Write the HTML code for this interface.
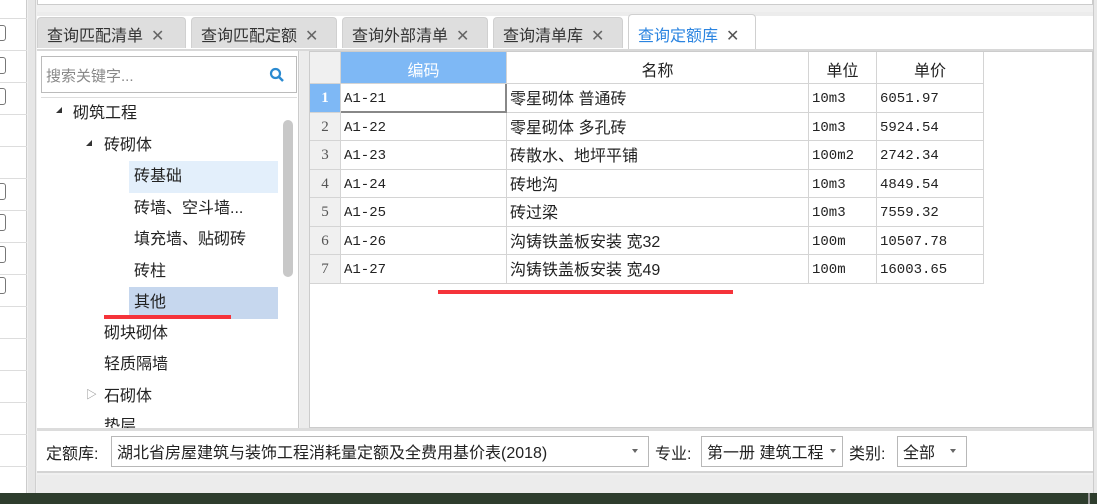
<!DOCTYPE html>
<html><head><meta charset="utf-8"><style>
*{margin:0;padding:0;box-sizing:border-box}
body{width:1097px;height:504px;overflow:hidden;background:#f0f0f0;font-family:"Liberation Sans","Noto Sans CJK SC",sans-serif;font-size:15px;color:#222;position:relative}
.a{position:absolute}
.tab{position:absolute;top:17px;height:31px;background:#dedede;border:1px solid #d0d0d0;border-bottom:none;border-radius:4px 4px 0 0;font-size:16px;color:#333;padding:4px 0 0 9px;white-space:nowrap}
.tab b{font-weight:normal;color:#666;margin-left:8px}
.tr{position:absolute;font-size:16px;color:#222;white-space:nowrap}
.cell{position:absolute;border-right:1px solid #d4d4d4;border-bottom:1px solid #d4d4d4;background:#fff;white-space:nowrap;overflow:hidden}
.mono{font-family:"Liberation Mono","Noto Sans CJK SC",monospace;font-size:14px}
.rh{position:absolute;left:310px;width:31px;background:#f0f0f0;border-right:1px solid #d4d4d4;border-bottom:1px solid #d4d4d4;text-align:center;font-family:"Liberation Serif",serif;font-size:15px;color:#555}
.sel{position:absolute;height:31px;top:436px;background:#fff;border:1px solid #b8b8b8;font-size:16px;padding:2px 0 0 5px;white-space:nowrap;overflow:hidden}
.arr{position:absolute;top:12px;width:0;height:0;border-left:3px solid transparent;border-right:3px solid transparent;border-top:4px solid #666}
.tri{position:absolute;width:0;height:0;border-left:6px solid transparent;border-bottom:6px solid #333}
</style></head><body>
<div class="a" style="left:0;top:0;width:27px;height:493px;background:#fff;border-right:1px solid #ccc"></div>
<div class="a" style="left:0;top:18px;width:27px;height:1px;background:#ddd;box-shadow:0 32px 0 #ddd,0 64px 0 #ddd,0 96px 0 #ddd,0 128px 0 #ddd,0 160px 0 #ddd,0 192px 0 #ddd,0 224px 0 #ddd,0 256px 0 #ddd,0 288px 0 #ddd,0 320px 0 #ddd,0 352px 0 #ddd,0 384px 0 #ddd,0 416px 0 #ddd,0 448px 0 #ddd"></div>
<div class="a" style="left:-6px;top:25px;width:12px;height:16px;border:1px solid #777;border-radius:3px"></div>
<div class="a" style="left:-6px;top:57px;width:12px;height:17px;border:1px solid #777;border-radius:3px"></div>
<div class="a" style="left:-6px;top:88px;width:12px;height:17px;border:1px solid #777;border-radius:3px"></div>
<div class="a" style="left:-6px;top:183px;width:12px;height:17px;border:1px solid #777;border-radius:3px"></div>
<div class="a" style="left:-6px;top:214px;width:12px;height:17px;border:1px solid #777;border-radius:3px"></div>
<div class="a" style="left:-6px;top:246px;width:12px;height:17px;border:1px solid #777;border-radius:3px"></div>
<div class="a" style="left:-6px;top:277px;width:12px;height:17px;border:1px solid #777;border-radius:3px"></div>
<div class="a" style="left:28px;top:0;width:8px;height:493px;background:#e6e6e6;border-right:1px solid #d0d0d0"></div>
<div class="a" style="left:37px;top:0;width:1056px;height:5px;background:#fff;border:1px solid #ccc;border-top:none"></div>
<div class="a" style="left:37px;top:12px;width:1056px;height:38px;background:#fff"></div>
<div class="a" style="left:37px;top:12px;width:1056px;height:4px;background:#ececec"></div>
<div class="tab" style="left:37px;width:149px">查询匹配清单<b>✕</b></div>
<div class="tab" style="left:191px;width:146px">查询匹配定额<b>✕</b></div>
<div class="tab" style="left:342px;width:146px">查询外部清单<b>✕</b></div>
<div class="tab" style="left:493px;width:130px">查询清单库<b>✕</b></div>
<div class="tab" style="left:628px;top:14px;height:36px;width:128px;background:#fff;color:#2b84e0;padding-top:7px">查询定额库<b style="color:#555">✕</b></div>
<div class="a" style="left:37px;top:49px;width:1056px;height:2px;background:#d8d8d8"></div>
<div class="a" style="left:37px;top:51px;width:262px;height:377px;background:#fff;border-right:1px solid #ccc"></div>
<div class="a" style="left:41px;top:56px;width:256px;height:37px;border:1px solid #bbb;background:#fff"></div>
<div class="a" style="left:46px;top:65px;font-size:15px;color:#888">搜索关键字...</div>
<svg class="a" style="left:269px;top:67px" width="16" height="16"><circle cx="6.5" cy="6.5" r="4.5" fill="none" stroke="#2b8ad0" stroke-width="2.2"/><line x1="10" y1="10" x2="14" y2="14" stroke="#2b8ad0" stroke-width="2.5"/></svg>
<div class="a" style="left:41px;top:97px;width:256px;height:1px;background:#ddd"></div>
<div class="a" style="left:283px;top:120px;width:10px;height:157px;background:#c8c8c8;border-radius:5px"></div>
<div class="a" style="left:129px;top:161px;width:149px;height:32px;background:#e3effb"></div>
<div class="a" style="left:129px;top:287px;width:149px;height:32px;background:#c6d7ee"></div>
<div class="tri" style="left:56px;top:107px"></div>
<div class="tri" style="left:86px;top:140px"></div>
<div class="tr" style="left:73px;top:99px">砌筑工程</div>
<div class="tr" style="left:104px;top:131px">砖砌体</div>
<div class="tr" style="left:134px;top:162px">砖基础</div>
<div class="tr" style="left:134px;top:194px">砖墙、空斗墙...</div>
<div class="tr" style="left:134px;top:225px">填充墙、贴砌砖</div>
<div class="tr" style="left:134px;top:257px">砖柱</div>
<div class="tr" style="left:134px;top:288px">其他</div>
<div class="tr" style="left:104px;top:319px">砌块砌体</div>
<div class="tr" style="left:104px;top:350px">轻质隔墙</div>
<div class="tr" style="left:86px;top:386px;font-size:11px;color:#888">▷</div>
<div class="tr" style="left:104px;top:382px">石砌体</div>
<div class="tr" style="left:104px;top:412px;height:16px;overflow:hidden">垫层</div>
<div class="a" style="left:104px;top:315px;width:127px;height:4px;background:#f5333a"></div>
<div class="a" style="left:300px;top:51px;width:9px;height:377px;background:#ececec"></div>
<div class="a" style="left:309px;top:51px;width:784px;height:377px;background:#fff;border:1px solid #ccc"></div>
<div class="a" style="left:310px;top:52px;width:31px;height:32px;background:#f0f0f0;border-right:1px solid #d4d4d4;border-bottom:1px solid #d4d4d4"></div>
<div class="cell" style="left:341px;top:52px;width:166px;height:32px;background:#7eb8f5;color:#fff;text-align:center;font-size:16px;padding-top:5px">编码</div>
<div class="cell" style="left:507px;top:52px;width:302px;height:32px;text-align:center;font-size:16px;padding-top:5px">名称</div>
<div class="cell" style="left:809px;top:52px;width:68px;height:32px;text-align:center;font-size:16px;padding-top:5px">单位</div>
<div class="cell" style="left:877px;top:52px;width:107px;height:32px;text-align:center;font-size:16px;padding-top:5px">单价</div>
<div id="rows"></div>
<script>
var d=[["A1-21","零星砌体 普通砖","10m3","6051.97"],["A1-22","零星砌体 多孔砖","10m3","5924.54"],["A1-23","砖散水、地坪平铺","100m2","2742.34"],["A1-24","砖地沟","10m3","4849.54"],["A1-25","砖过梁","10m3","7559.32"],["A1-26","沟铸铁盖板安装 宽32","100m","10507.78"],["A1-27","沟铸铁盖板安装 宽49","100m","16003.65"]];
var h="";
for(var i=0;i<7;i++){var t=Math.round(84+i*28.5),hh=Math.round(84+(i+1)*28.5)-t;
h+='<div class="rh" style="top:'+t+'px;height:'+hh+'px;padding-top:6px;'+(i==0?'background:#7eb8f5;color:#fff;font-weight:bold':'')+'">'+(i+1)+'</div>';
h+='<div class="cell mono" style="left:341px;top:'+t+'px;width:166px;height:'+hh+'px;padding:7px 0 0 3px;'+(i==0?'border:2px solid #888;border-top:none;border-left:none':'')+'">'+d[i][0]+'</div>';
h+='<div class="cell" style="left:507px;top:'+t+'px;width:302px;height:'+hh+'px;padding:1px 0 0 3px;font-size:16px">'+d[i][1]+'</div>';
h+='<div class="cell mono" style="left:809px;top:'+t+'px;width:68px;height:'+hh+'px;padding:7px 0 0 3px">'+d[i][2]+'</div>';
h+='<div class="cell mono" style="left:877px;top:'+t+'px;width:107px;height:'+hh+'px;padding:7px 0 0 3px">'+d[i][3]+'</div>';}
document.getElementById("rows").innerHTML=h;
</script>
<div class="a" style="left:438px;top:290px;width:295px;height:4px;background:#f5333a"></div>
<div class="a" style="left:37px;top:428px;width:1056px;height:3px;background:#dcdcdc"></div>
<div class="a" style="left:37px;top:431px;width:1056px;height:42px;background:#fff;border-bottom:2px solid #d4d4d4"></div>
<div class="a" style="left:46px;top:440px;font-size:16px">定额库:</div>
<div class="sel" style="left:111px;width:538px">湖北省房屋建筑与装饰工程消耗量定额及全费用基价表(2018)<span class="arr" style="left:520px"></span></div>
<div class="a" style="left:655px;top:440px;font-size:16px">专业:</div>
<div class="sel" style="left:701px;width:142px"><span style="display:inline-block;width:122px;overflow:hidden;vertical-align:top">第一册 建筑工程</span><span class="arr" style="left:128px"></span></div>
<div class="a" style="left:849px;top:440px;font-size:16px">类别:</div>
<div class="sel" style="left:897px;width:70px">全部<span class="arr" style="left:52px"></span></div>
<div class="a" style="left:37px;top:475px;width:1056px;height:18px;background:#ececec"></div>
<div class="a" style="left:1093px;top:0;width:4px;height:493px;background:#e8e8e8;border-left:1px solid #ccc"></div>
<div class="a" style="left:0;top:493px;width:1097px;height:11px;background:#2e3d2d"></div>
<div class="a" style="left:1088px;top:493px;width:2px;height:11px;background:#999"></div>
</body></html>
